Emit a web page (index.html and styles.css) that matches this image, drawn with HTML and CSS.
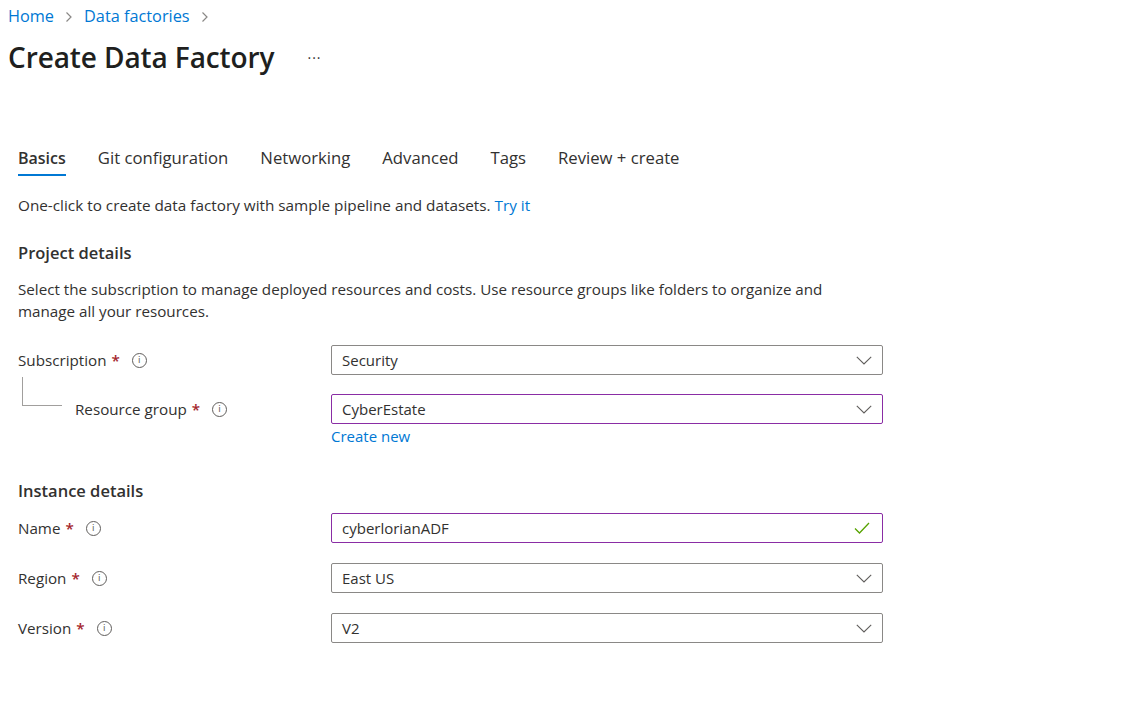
FILE: index.html
```html
<!DOCTYPE html>
<html>
<head>
<meta charset="utf-8">
<link rel="stylesheet" href="styles.css">
</head>
<body>
<nav class="breadcrumb">
  <a class="crumb">Home</a>
  <svg class="sep" width="8" height="12" viewBox="0 0 8 12"><path d="M1.5 1.5 L6 6 L1.5 10.5" fill="none" stroke="#8a8886" stroke-width="1.2"/></svg>
  <a class="crumb">Data factories</a>
  <svg class="sep" width="8" height="12" viewBox="0 0 8 12"><path d="M1.5 1.5 L6 6 L1.5 10.5" fill="none" stroke="#8a8886" stroke-width="1.2"/></svg>
</nav>
<header class="title-row">
  <h1 class="title">Create Data Factory</h1>
  <span class="more">···</span>
</header>
<main class="content">
  <div class="tabs">
    <div class="tab active">Basics</div>
    <div class="tab">Git configuration</div>
    <div class="tab">Networking</div>
    <div class="tab">Advanced</div>
    <div class="tab">Tags</div>
    <div class="tab">Review + create</div>
  </div>
  <p class="intro">One-click to create data factory with sample pipeline and datasets. <a class="link">Try it</a></p>

  <h2 class="section">Project details</h2>
  <p class="desc">Select the subscription to manage deployed resources and costs. Use resource groups like folders to organize and manage all your resources.</p>

  <div class="row">
    <div class="label">Subscription <span class="req">*</span> <span class="info">i</span></div>
    <div class="field">
      <div class="select">Security<svg class="chev" width="16" height="9" viewBox="0 0 16 9"><path d="M0.8 0.8 L8 8 L15.2 0.8" fill="none" stroke="#605e5c" stroke-width="1.1"/></svg></div>
    </div>
  </div>
  <div class="row sub">
    <div class="label nested"><span class="tree"></span>Resource group <span class="req">*</span> <span class="info">i</span></div>
    <div class="field">
      <div class="select focus">CyberEstate<svg class="chev" width="16" height="9" viewBox="0 0 16 9"><path d="M0.8 0.8 L8 8 L15.2 0.8" fill="none" stroke="#605e5c" stroke-width="1.1"/></svg></div>
      <a class="link create">Create new</a>
    </div>
  </div>

  <h2 class="section inst">Instance details</h2>
  <div class="row">
    <div class="label">Name <span class="req">*</span> <span class="info">i</span></div>
    <div class="field">
      <div class="select focus">cyberlorianADF<svg class="check" width="16" height="12" viewBox="0 0 16 12"><path d="M1 6.5 L5.5 11 L15 1" fill="none" stroke="#57a300" stroke-width="1.3"/></svg></div>
    </div>
  </div>
  <div class="row">
    <div class="label">Region <span class="req">*</span> <span class="info">i</span></div>
    <div class="field">
      <div class="select">East US<svg class="chev" width="16" height="9" viewBox="0 0 16 9"><path d="M0.8 0.8 L8 8 L15.2 0.8" fill="none" stroke="#605e5c" stroke-width="1.1"/></svg></div>
    </div>
  </div>
  <div class="row">
    <div class="label">Version <span class="req">*</span> <span class="info">i</span></div>
    <div class="field">
      <div class="select">V2<svg class="chev" width="16" height="9" viewBox="0 0 16 9"><path d="M0.8 0.8 L8 8 L15.2 0.8" fill="none" stroke="#605e5c" stroke-width="1.1"/></svg></div>
    </div>
  </div>
</main>
</body>
</html>
```

FILE: styles.css
```css
* { box-sizing: border-box; }
body {
  margin: 0;
  background: #fff;
  font-family: "Open Sans", "Noto Sans", sans-serif;
  color: #323130;
  font-size: 14px;
}
a { text-decoration: none; }
.breadcrumb {
  display: flex;
  align-items: center;
  gap: 11px;
  height: 32px;
  padding: 0 8px;
}
.crumb {
  color: #0078d4;
  font-size: 16.3px;
}
.sep { margin-top: 1px; }
.title-row {
  display: flex;
  align-items: center;
  height: 50px;
  padding: 0 8px;
}
.title {
  margin: 0;
  font-size: 28px;
  font-weight: 600;
  color: #201f1e;
  letter-spacing: -0.1px;
}
.more {
  margin-left: 33px;
  font-size: 14px;
  color: #323130;
  letter-spacing: 1px;
}
.content {
  padding: 0 18px;
}
.tabs {
  display: flex;
  gap: 32px;
  margin-top: 62px;
  height: 42px;
}
.tab {
  font-size: 16.7px;
  line-height: 24px;
  padding-top: 2px;
  color: #323130;
}
.tab.active {
  font-size: 16px;
  font-weight: 600;
  border-bottom: 2px solid #0078d4;
  height: 32px;
  padding-top: 2px;
}
.intro {
  margin: 9px 0 0;
  font-size: 15.3px;
  line-height: 20px;
}
.link { color: #0078d4; }
.section {
  margin: 27px 0 0;
  font-size: 16.5px;
  font-weight: 600;
  line-height: 22px;
  color: #323130;
}
.section.inst { margin-top: 33px; }
.desc {
  margin: 14px 0 0;
  font-size: 15.2px;
  line-height: 22px;
  max-width: 840px;
}
.row {
  display: flex;
  margin-top: 20px;
}
.desc + .row { margin-top: 23px; }
.row.sub { margin-top: 19px; }
.section + .row { margin-top: 11px; }
.label {
  width: 313px;
  height: 30px;
  display: flex;
  align-items: center;
  font-size: 15.2px;
  position: relative;
}
.label.nested { padding-left: 57px; }
.tree {
  position: absolute;
  left: 4px;
  top: -17px;
  width: 40px;
  height: 29px;
  border-left: 1px solid #a19f9d;
  border-bottom: 1px solid #a19f9d;
}
.req {
  color: #a4262c;
  font-weight: 600;
  margin: 0 0 0 5px;
}
.info {
  display: inline-flex;
  align-items: center;
  justify-content: center;
  width: 15px;
  height: 15px;
  border: 1px solid #605e5c;
  border-radius: 50%;
  font-size: 9px;
  line-height: 1;
  color: #605e5c;
  margin-left: 12px;
  font-family: "DejaVu Sans", sans-serif;
}
.field {
  width: 552px;
  display: flex;
  flex-direction: column;
}
.select {
  height: 30px;
  border: 1px solid #8a8886;
  border-radius: 2px;
  display: flex;
  align-items: center;
  justify-content: space-between;
  padding: 0 10px 0 10px;
  font-size: 15px;
  color: #323130;
}
.select.focus { border-color: #8a2da5; }
.chev { margin-right: 0; }
.check { margin-right: 2px; }
.create {
  font-size: 15px;
  line-height: 22px;
  margin-top: 1px;
}
```
